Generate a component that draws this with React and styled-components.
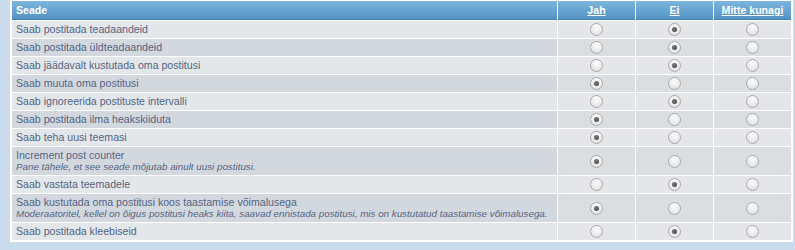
import React from "react";
import styled, { createGlobalStyle } from "styled-components";

const Global = createGlobalStyle`
  html, body { margin: 0; padding: 0; }
  body {
    background: #cadcec;
    font-family: "Liberation Sans", Arial, Helvetica, sans-serif;
    overflow: hidden;
  }
`;

const Page = styled.div`
  padding: 0 2px 0 10px;
`;

const Panel = styled.div`
  background: #ffffff;
  padding: 0 1px 1px 1px;
`;

const Table = styled.table`
  width: 100%;
  border-collapse: separate;
  border-spacing: 1px;
  table-layout: fixed;
  font-size: 10.6px;
  color: #536482;
`;

const Th = styled.th`
  height: 19px;
  padding: 0 4px;
  box-sizing: border-box;
  color: #ffffff;
  font-weight: bold;
  font-size: 10.6px;
  text-align: ${(p) => (p.$center ? "center" : "left")};
  background: linear-gradient(#7db5dc 0%, #65a3d0 55%, #5394c5 100%);
  border-bottom: 1px solid #3d7fb2;
  width: ${(p) => p.$w || "auto"};
`;

const HeadLink = styled.a`
  color: #ffffff;
  text-decoration: underline;
  cursor: pointer;
`;

const Tr = styled.tr``;

const LabelCell = styled.td`
  padding: 3px 4px;
  line-height: 11px;
  vertical-align: middle;
  background: ${(p) => (p.$alt ? "#d3d8df" : "#e4e7ea")};
`;

const RadioCell = styled.td`
  padding: 0;
  vertical-align: middle;
  text-align: center;
  background: ${(p) => (p.$alt ? "#dbdee1" : "#e4e6e9")};
`;

const Explain = styled.span`
  display: block;
  font-style: italic;
  font-size: 9.8px;
`;

const Radio = styled.span`
  display: block;
  margin: 0 auto;
  width: 11px;
  height: 11px;
  border-radius: 50%;
  border: 1px solid #a9a9a9;
  background: radial-gradient(circle at 50% 35%, #fbfbfb 0%, #e9e9e9 60%, #d8d8d8 100%);
  position: relative;
  box-shadow: inset 0 1px 1px rgba(255,255,255,0.8);
  &::after {
    content: "";
    display: ${(p) => (p.$checked ? "block" : "none")};
    position: absolute;
    left: 3px;
    top: 3px;
    width: 5px;
    height: 5px;
    border-radius: 50%;
    background: radial-gradient(circle at 40% 35%, #777 0%, #444 100%);
  }
`;

const rows = [
  { label: "Saab postitada teadaandeid", v: 1 },
  { label: "Saab postitada üldteadaandeid", v: 1 },
  { label: "Saab jäädavalt kustutada oma postitusi", v: 1 },
  { label: "Saab muuta oma postitusi", v: 0 },
  { label: "Saab ignoreerida postituste intervalli", v: 1 },
  { label: "Saab postitada ilma heakskiiduta", v: 0 },
  { label: "Saab teha uusi teemasi", v: 0 },
  {
    label: "Increment post counter",
    explain: "Pane tähele, et see seade mõjutab ainult uusi postitusi.",
    v: 0,
  },
  { label: "Saab vastata teemadele", v: 1 },
  {
    label: "Saab kustutada oma postitusi koos taastamise võimalusega",
    explain:
      "Moderaatoritel, kellel on õigus postitusi heaks kiita, saavad ennistada postitusi, mis on kustutatud taastamise võimalusega.",
    v: 0,
  },
  { label: "Saab postitada kleebiseid", v: 1 },
];

export default function App() {
  return (
    <>
      <Global />
      <Page>
        <Panel>
          <Table>
            <thead>
              <tr>
                <Th>Seade</Th>
                <Th $center $w="77px">
                  <HeadLink>Jah</HeadLink>
                </Th>
                <Th $center $w="77px">
                  <HeadLink>Ei</HeadLink>
                </Th>
                <Th $center $w="77px">
                  <HeadLink>Mitte kunagi</HeadLink>
                </Th>
              </tr>
            </thead>
            <tbody>
              {rows.map((r, i) => {
                const alt = i % 2 === 1;
                return (
                  <Tr key={i}>
                    <LabelCell $alt={alt}>
                      {r.label}
                      {r.explain && <Explain>{r.explain}</Explain>}
                    </LabelCell>
                    {[0, 1, 2].map((c) => (
                      <RadioCell key={c} $alt={alt}>
                        <Radio $checked={r.v === c} />
                      </RadioCell>
                    ))}
                  </Tr>
                );
              })}
            </tbody>
          </Table>
        </Panel>
      </Page>
    </>
  );
}
